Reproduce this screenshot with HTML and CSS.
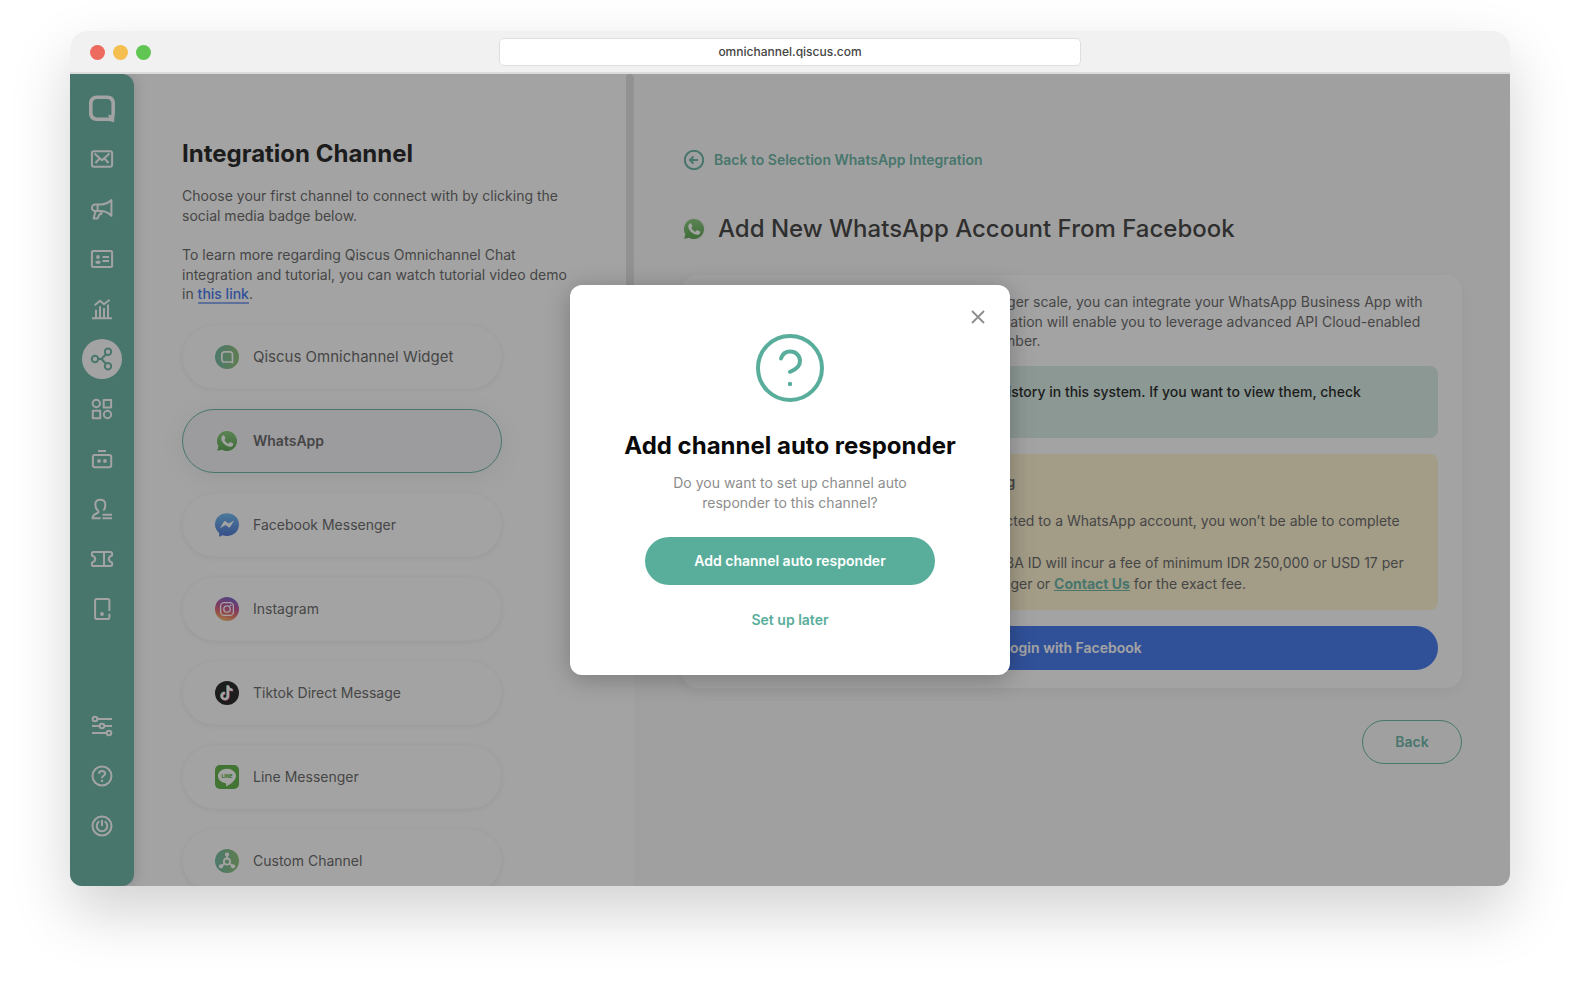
FILE: index.html
```
<!DOCTYPE html>
<html lang="en">
<head>
    <meta charset="UTF-8">
    <meta name="viewport" content="width=device-width, initial-scale=1.0">
    <title>Qiscus Omnichannel - Integration</title>
    <link rel="stylesheet" href="styles.css">
</head>
<body>
    <!-- shared icons -->
    <svg class="defs" width="0" height="0" aria-hidden="true">
        <defs>
            <linearGradient id="waGrad" x1="0" y1="0" x2="0" y2="1">
                <stop offset="0" stop-color="#7cc76e"/><stop offset="1" stop-color="#4a9c40"/>
            </linearGradient>
            <linearGradient id="qGrad" x1="0" y1="0" x2="1" y2="0">
                <stop offset="0" stop-color="#62b39d"/><stop offset="1" stop-color="#83b968"/>
            </linearGradient>
            <linearGradient id="fbGrad" x1="0" y1="0" x2="0" y2="1">
                <stop offset="0" stop-color="#5fb4f0"/><stop offset="1" stop-color="#3a66cf"/>
            </linearGradient>
            <linearGradient id="igGrad" x1="0.35" y1="1" x2="0.6" y2="0">
                <stop offset="0" stop-color="#f6b45c"/><stop offset="0.3" stop-color="#e8625a"/>
                <stop offset="0.6" stop-color="#b93c8c"/><stop offset="1" stop-color="#6a55c4"/>
            </linearGradient>
        </defs>
        <symbol id="whatsapp" viewBox="0 0 24 24">
            <path fill="#f4f4f4" d="M12 .8A11.2 11.2 0 0 0 2.3 17.600L.8 23.400l6-1.500A11.200 11.200 0 1 0 12 .8z"/>
            <path fill="url(#waGrad)" d="M12 2a10 10 0 0 0-8.600 15.100L2.300 21.800l4.800-1.100A10 10 0 1 0 12 2z"/>
            <path fill="#fff" d="M8 6.500c.5-.4 1.100-.3 1.400.3l.9 2c.2.500.1.900-.3 1.300l-.6.8c.9 1.800 2.200 3 4.100 3.900l1-1.200c.3-.4.700-.5 1.200-.3l2 1c.6.3.7.8.500 1.400-.5 1.500-2 2.200-3.400 2-4.500-.8-8.300-4.300-8.500-8.200 0-1.200.7-2.300 1.700-3z"/>
        </symbol>
    </svg>

    <div class="browser">
        <header class="browser-bar">
            <div class="dots">
                <span class="dot dot-red"></span>
                <span class="dot dot-yellow"></span>
                <span class="dot dot-green"></span>
            </div>
            <div class="address">omnichannel.qiscus.com</div>
        </header>

        <div class="app">
            <nav class="sidebar">
                <a class="logo" href="#" aria-label="Qiscus">
                    <svg width="26" height="28" viewBox="0 0 26 28"><path fill="#fff" fill-rule="evenodd" d="M8 .5h10.500c4.500 0 7.500 3 7.500 7.500V18c0 1-.2 2-.5 2.800l-.4 6.400-5-1.200H8c-4.800 0-8-3-8-7.500V8C0 3.500 3.500.5 8 .5zM8.200 4C5.500 4 3.600 5.700 3.600 8.300v9.400c0 2.900 1.900 4.700 4.600 4.700h11.900l-1-2.700 3.300.2V8.300C22.400 5.700 20.700 4 18 4z"/></svg>
                </a>
                <a class="nav-item" href="#" aria-label="Inbox">
                    <svg viewBox="0 0 24 24"><rect x="1.900" y="4.300" width="20.200" height="15.400" rx="2"/><path d="M4.500 6.500l7.500 6.700 7.500-6.700M5.500 16l4-4.500M18.500 16l-4-4.500"/></svg>
                </a>
                <a class="nav-item" href="#" aria-label="Broadcast">
                    <svg viewBox="0 0 24 24"><path d="M21.400 3c-3 3-6.500 4.400-10.700 4.400H5.200a3.300 3.300 0 0 0 0 6.600h5.500c4.200 0 7.700 1.800 10.700 4.700zM7.600 7.400V14M5.600 14l-2 7.400h4L9.800 17h1.500v-3"/></svg>
                </a>
                <a class="nav-item" href="#" aria-label="Contacts">
                    <svg viewBox="0 0 24 24"><rect x="1.900" y="3.900" width="20.200" height="16.200" rx="1.500"/><circle class="solid" cx="8" cy="10" r="1.900"/><ellipse class="solid" cx="8" cy="15.200" rx="2.700" ry="1.800"/><path d="M12.500 10H19M12.500 14H19"/></svg>
                </a>
                <a class="nav-item" href="#" aria-label="Analytics">
                    <svg viewBox="0 0 24 24"><path d="M2 21.200h20M6 20.500v-7.700M10 20.500V9.300M14 20.500V11M18 20.500V7.500M4.700 8.300L10 3.800l4 3.500 5.600-4.500"/></svg>
                </a>
                <a class="nav-item active" href="#" aria-label="Integration">
                    <svg viewBox="0 0 24 24"><circle cx="5" cy="12" r="3.200"/><circle cx="18" cy="4.800" r="3.200"/><circle cx="18" cy="19.200" r="3.200"/><path d="M8.200 12h3.300l4.400-4.700M11.500 12l4.400 4.700"/></svg>
                </a>
                <a class="nav-item" href="#" aria-label="App center">
                    <svg viewBox="0 0 24 24"><circle cx="6.300" cy="6.500" r="3.700"/><rect x="13.700" y="3" width="7.400" height="7.400"/><rect x="2.800" y="13.800" width="7.400" height="7.400"/><circle cx="17.500" cy="17.500" r="3.700"/></svg>
                </a>
                <a class="nav-item" href="#" aria-label="Bot">
                    <svg viewBox="0 0 24 24"><path d="M8 4h8"/><rect x="2.900" y="7.900" width="18.300" height="12.300" rx="2"/><circle class="solid" cx="9" cy="14" r="1.900"/><circle class="solid" cx="15" cy="14" r="1.900"/></svg>
                </a>
                <a class="nav-item" href="#" aria-label="Agents">
                    <svg viewBox="0 0 24 24"><path d="M13.300 13.500c2-1.500 2-4 2-6 0-3-2-4.700-5-4.700s-5 1.700-5 4.700c0 3 1.200 5 3 6.300v1.700c-2.300 1-5.800 2.500-5.800 5.700h8.200M12.500 17.700H22M12.500 21.200H22"/></svg>
                </a>
                <a class="nav-item" href="#" aria-label="Tickets">
                    <svg viewBox="0 0 24 24"><path d="M3.500 5h17c1 0 1.600.6 1.600 1.500v2c-2.200.7-3.300 2-3.300 3.600s1.100 2.800 3.300 3.500v2c0 .9-.6 1.500-1.600 1.500h-17c-1 0-1.600-.6-1.600-1.500v-2c2.200-.7 3.300-1.900 3.300-3.500S4.100 9.200 1.900 8.500v-2C1.900 5.600 2.500 5 3.500 5zM14 5v14"/></svg>
                </a>
                <a class="nav-item" href="#" aria-label="Devices">
                    <svg viewBox="0 0 24 24"><path d="M19.400 14V3.700c0-1.100-.7-1.800-1.800-1.800H6.900c-1.100 0-1.800.7-1.800 1.800v16.600c0 1.100.7 1.800 1.800 1.800h10.700c1.100 0 1.800-.7 1.800-1.800v-3.600"/><circle class="solid" cx="12" cy="17" r="1.900"/></svg>
                </a>
                <div class="nav-bottom">
                    <a class="nav-item" href="#" aria-label="Settings">
                        <svg viewBox="0 0 24 24"><circle cx="5" cy="5" r="2.300"/><circle cx="12" cy="12" r="2.300"/><circle cx="19" cy="19" r="2.300"/><path d="M7.500 5H22M2 12h7.500M14.500 12H22M2 19h14.500"/></svg>
                    </a>
                    <a class="nav-item" href="#" aria-label="Help">
                        <svg viewBox="0 0 24 24"><circle cx="12" cy="12" r="9.500"/><path d="M9 9.700C9 8 10.300 7 12 7s3.100 1 3.100 2.700c0 2-3.100 2.300-3.100 4.500"/><circle class="solid" cx="12" cy="16.900" r="1.200"/></svg>
                    </a>
                    <a class="nav-item" href="#" aria-label="Log out">
                        <svg viewBox="0 0 24 24"><circle cx="12" cy="12" r="9.500"/><path d="M9.300 7.400a5.300 5.300 0 1 0 5.400 0M12 6v6"/></svg>
                    </a>
                </div>
            </nav>

            <section class="channels">
                <h1>Integration Channel</h1>
                <div class="intro">
                    <p>Choose your first channel to connect with by clicking the social media badge below.</p>
                    <p>To learn more regarding Qiscus Omnichannel Chat integration and tutorial, you can watch tutorial video demo in <a href="#">this link</a>.</p>
                </div>
                <div class="channel-list">
                    <button class="channel widget">
                        <svg viewBox="0 0 24 24"><circle cx="12" cy="12" r="12" fill="url(#qGrad)"/><path fill="none" stroke="#fff" stroke-width="1.700" d="M9.500 6.800h5.300c1.700 0 2.700 1 2.700 2.700v8l-1.500-.5H9.500c-1.700 0-2.700-1-2.700-2.700V9.500c0-1.700 1-2.700 2.700-2.700z"/></svg>
                        <span>Qiscus Omnichannel Widget</span>
                    </button>
                    <button class="channel selected">
                        <svg><use href="#whatsapp"/></svg>
                        <span>WhatsApp</span>
                    </button>
                    <button class="channel">
                        <svg viewBox="0 0 24 24"><path fill="url(#fbGrad)" d="M12 .2C5.300.2 0 5 0 11.500c0 3.500 1.600 6.500 4.200 8.600v3.600l3.500-1.400c1.400.4 2.800.6 4.300.6 6.700 0 12-4.900 12-11.400S18.700.2 12 .2z"/><path fill="#fff" d="M4.800 15.200l4-6.400c.5-.8 1.300-.9 2-.4l2.600 2.100 5.800-3-3.900 6.200c-.5.8-1.300.9-2 .4l-2.700-2z"/></svg>
                        <span>Facebook Messenger</span>
                    </button>
                    <button class="channel">
                        <svg viewBox="0 0 24 24"><circle cx="12" cy="12" r="12" fill="url(#igGrad)"/><g fill="none" stroke="#fff" stroke-width="1.300"><rect x="5.600" y="5.600" width="12.800" height="12.800" rx="3.500"/><circle cx="12" cy="12" r="3.200"/></g><circle cx="15.600" cy="8.400" r=".9" fill="#fff"/></svg>
                        <span>Instagram</span>
                    </button>
                    <button class="channel">
                        <svg viewBox="0 0 24 24"><circle cx="12" cy="12" r="12" fill="#0b0b0b"/><g fill="none" stroke-width="2.300"><path stroke="#6fd8dc" d="M12.400 4.200v10.500a3.100 3.100 0 1 1-3.100-3.100M12.400 4.500c.3 2.500 1.900 3.900 4.600 4.100"/><path stroke="#e8496c" d="M13.600 5v10.500a3.100 3.100 0 1 1-3.100-3.100M13.600 5.300c.3 2.500 1.900 3.900 4.600 4.100"/><path stroke="#fff" d="M13 4.600v10.500a3.100 3.100 0 1 1-3.100-3.100M13 4.900c.3 2.500 1.900 3.900 4.600 4.100"/></g></svg>
                        <span>Tiktok Direct Message</span>
                    </button>
                    <button class="channel">
                        <svg viewBox="0 0 24 24"><rect width="24" height="24" rx="5" fill="#4fab33"/><path fill="#fff" d="M12 3.800c-5 0-9 3.300-9 7.300 0 3.600 3.200 6.600 7.500 7.200.8.200.8.500.7 1.300l-.1 1.200c0 .4.200.6.700.4 2.300-1.200 9.200-5.100 9.200-10.100 0-4-4-7.300-9-7.300z"/><text class="line-word" x="12" y="13" text-anchor="middle">LINE</text></svg>
                        <span>Line Messenger</span>
                    </button>
                    <button class="channel">
                        <svg viewBox="0 0 24 24"><circle cx="12" cy="12" r="12" fill="url(#qGrad)"/><g fill="none" stroke="#fff" stroke-width="1.800"><circle cx="12" cy="12.600" r="3.100"/><path d="M12 9.500V6M9.500 14.500L6.500 17M14.500 14.500l3 2.500"/></g><g fill="#fff"><circle cx="12" cy="5.500" r="2.100"/><circle cx="6" cy="17.300" r="2.100"/><circle cx="18" cy="17.300" r="2.100"/></g></svg>
                        <span>Custom Channel</span>
                    </button>
                </div>
            </section>

            <div class="scrollbar"></div>

            <main class="content">
                <a class="back-link" href="#">
                    <svg viewBox="0 0 20 20"><circle cx="10" cy="10" r="9.200"/><path d="M14 10H6.500M9.500 6.500L6 10l3.500 3.500"/></svg>
                    Back to Selection WhatsApp Integration
                </a>
                <h2><svg><use href="#whatsapp"/></svg>Add New WhatsApp Account From Facebook</h2>

                <div class="card">
                    <p>To take your WhatsApp Business App on a larger scale, you can integrate your WhatsApp Business App with<br>Qiscus Omnichannel Chat product. This integration will enable you to leverage advanced API Cloud-enabled<br>features with keeping your existing phone number.</p>
                    <div class="info">You will not be able to see your past chat history in this system. If you want to view them, check<br>your WhatsApp Business App.</div>
                    <div class="warning">
                        <h3>Please read these points before connecting</h3>
                        <ul>
                            <li>If your Facebook page is already connected to a WhatsApp account, you won’t be able to complete<br>the integration process.</li>
                            <li>Any changes of your number or the WABA ID will incur a fee of minimum IDR 250,000 or USD 17 per<br>adjustment. Contact your Account Manager or <a href="#">Contact Us</a> for the exact fee.</li>
                        </ul>
                    </div>
                    <button class="fb-button">Login with Facebook</button>
                </div>
                <button class="back-button">Back</button>
            </main>

            <div class="overlay">
                <div class="modal" role="dialog" aria-labelledby="modalTitle">
                    <button class="close" aria-label="Close">
                        <svg viewBox="0 0 14 14"><path d="M1 1l12 12M13 1L1 13"/></svg>
                    </button>
                    <svg class="question" viewBox="0 0 68 68"><circle cx="34" cy="34" r="32"/><path d="M25 24.500c1.200-4 4.500-7 9.200-7 5.600 0 9.800 4 9.800 9.500 0 6-4.500 8.800-10 10.800"/><circle class="point" cx="34" cy="50" r="2.200"/></svg>
                    <h2 id="modalTitle">Add channel auto responder</h2>
                    <p>Do you want to set up channel auto responder to this channel?</p>
                    <button class="primary">Add channel auto responder</button>
                    <button class="later">Set up later</button>
                </div>
            </div>
        </div>
    </div>
</body>
</html>
```
FILE: styles.css
```
* {
    box-sizing: border-box;
}

body {
    font-family: Inter, "Liberation Sans", sans-serif;
    font-size: 14px;
    line-height: 1.4;
    color: #565656;
    margin: 0;
    padding: 31px 70px 109px;
    height: 100vh;
    background: #fff;
}

h1, h2, h3, p, ul {
    margin: 0;
}

button {
    font: inherit;
    cursor: pointer;
}

.defs {
    position: absolute;
}

/* browser window */
.browser {
    display: flex;
    flex-direction: column;
    height: 100%;
    border-radius: 18px 18px 12px 12px;
    overflow: hidden;
    box-shadow: 0 26px 60px rgba(0, 0, 0, 0.18);
}

.browser-bar {
    display: grid;
    grid-template-columns: 1fr 582px 1fr;
    align-items: center;
    height: 43px;
    flex-shrink: 0;
    padding: 1px 20px 0;
    background: #f1f1f1;
    border-bottom: 2px solid #dcdcdc;
}

.dots {
    display: flex;
    gap: 8px;
}

.dot {
    width: 15px;
    height: 15px;
    border-radius: 50%;
}

.dot-red { background: #ed6a5e; }
.dot-yellow { background: #f5bf4f; }
.dot-green { background: #61c554; }

.address {
    height: 28px;
    line-height: 26px;
    text-align: center;
    font-size: 12px;
    font-weight: 500;
    color: #444;
    background: #fff;
    border: 1px solid #dedede;
    border-radius: 5px;
}

.app {
    position: relative;
    display: flex;
    flex: 1;
    min-height: 0;
    overflow: hidden;
    background: #fff;
}

/* sidebar */
.sidebar {
    display: flex;
    flex-direction: column;
    align-items: center;
    gap: 10px;
    width: 64px;
    flex-shrink: 0;
    padding: 15px 0 40px;
    background: #59ae9b;
    border-radius: 0 12px 12px 0;
    box-shadow: 2px 0 12px rgba(0, 0, 0, 0.15);
}

.logo {
    display: flex;
    align-items: center;
    height: 40px;
}

.nav-item {
    display: flex;
    align-items: center;
    justify-content: center;
    width: 40px;
    height: 40px;
    border-radius: 50%;
    color: #fff;
}

.nav-item svg {
    width: 24px;
    height: 24px;
    fill: none;
    stroke: currentColor;
    stroke-width: 2;
    stroke-linejoin: round;
}

.nav-item .solid {
    fill: currentColor;
    stroke: none;
}

.nav-item.active {
    background: #fff;
    color: #59ae9b;
}

.nav-bottom {
    display: flex;
    flex-direction: column;
    gap: 10px;
    margin-top: auto;
}

/* channel list */
.channels {
    width: 492px;
    flex-shrink: 0;
    padding: 64px 48px 0;
}

.channels h1 {
    font-size: 24px;
    line-height: 32px;
    font-weight: 700;
    color: #0a0a0a;
}

.intro {
    max-width: 388px;
    margin: 16px 0 21px;
}

.intro p + p {
    margin-top: 20px;
}

.intro a {
    font-weight: 500;
    color: #2f69ec;
    text-decoration: none;
    border-bottom: 2px solid #7fa2f0;
}

.channel-list {
    display: flex;
    flex-direction: column;
    gap: 20px;
}

.channel {
    display: flex;
    align-items: center;
    gap: 14px;
    width: 320px;
    height: 64px;
    flex-shrink: 0;
    padding: 0 32px;
    color: #565656;
    background: #fff;
    border: 1px solid #fbfbfb;
    border-radius: 32px;
    box-shadow: 0 1px 5px rgba(0, 0, 0, 0.08);
}

.channel svg {
    width: 24px;
    height: 24px;
}

.channel.widget {
    font-size: 15px;
}

.channel.selected {
    font-weight: 600;
    background: #f2f2f7;
    border-color: #59ae9b;
    box-shadow: 0 4px 24px rgba(0, 0, 0, 0.08);
}

.line-word {
    font-size: 5px;
    font-weight: 800;
    fill: #4fab33;
}

.scrollbar {
    width: 8px;
    flex-shrink: 0;
    height: 540px;
    background: #e0e0e0;
    border-radius: 4px;
}

/* right side */
.content {
    flex: 1;
    min-width: 0;
    display: flex;
    flex-direction: column;
    align-items: flex-start;
    padding: 76px 48px 0;
    background: #fafafa;
}

.back-link {
    display: flex;
    align-items: center;
    gap: 10px;
    height: 20px;
    padding-left: 2px;
    font-weight: 600;
    color: #59ae9b;
    text-decoration: none;
}

.back-link svg {
    width: 20px;
    height: 20px;
    fill: none;
    stroke: currentColor;
    stroke-width: 2;
}

.content h2 {
    display: flex;
    align-items: center;
    gap: 12px;
    margin: 43px 0 30px;
    font-size: 24px;
    line-height: 32px;
    font-weight: 500;
    color: #2c2c2c;
}

.content h2 svg {
    width: 24px;
    height: 24px;
}

.card {
    width: 100%;
    display: flex;
    flex-direction: column;
    padding: 17px 24px 18px;
    background: #fff;
    border-radius: 16px;
    box-shadow: 0 4px 16px rgba(0, 0, 0, 0.06);
    white-space: nowrap;
}

.info {
    margin-top: 15px;
    padding: 16px;
    line-height: 20px;
    font-weight: 500;
    color: #0a0a0a;
    background: #d5ebe3;
    border-radius: 8px;
}

.warning {
    margin: 16px 0;
    padding: 16px;
    background: #fff2cc;
    border-radius: 8px;
}

.warning h3 {
    margin-bottom: 16px;
    font-size: 14px;
    line-height: 24px;
    font-weight: 600;
}

.warning ul {
    padding-left: 22px;
    line-height: 21px;
}

.warning a {
    font-weight: 700;
    color: #59ae9b;
}

.fb-button {
    height: 44px;
    font-weight: 600;
    color: #fff;
    background: #2f69ec;
    border: none;
    border-radius: 22px;
}

.back-button {
    align-self: flex-end;
    width: 100px;
    height: 44px;
    margin-top: 32px;
    font-weight: 600;
    color: #59ae9b;
    background: transparent;
    border: 1px solid #59ae9b;
    border-radius: 22px;
}

/* modal */
.overlay {
    position: absolute;
    inset: 0;
    display: flex;
    align-items: center;
    justify-content: center;
    background: rgba(51, 51, 51, 0.45);
}

.modal {
    position: relative;
    display: flex;
    flex-direction: column;
    align-items: center;
    width: 440px;
    padding: 49px 48px 40px;
    text-align: center;
    background: #fff;
    border-radius: 12px;
    box-shadow: 0 4px 24px rgba(0, 0, 0, 0.25);
}

.close {
    position: absolute;
    top: 20px;
    right: 20px;
    display: flex;
    padding: 5px;
    background: none;
    border: none;
}

.close svg {
    width: 14px;
    height: 14px;
    fill: none;
    stroke: #8d8d8d;
    stroke-width: 1.8;
}

.question {
    width: 68px;
    height: 68px;
    fill: none;
    stroke: #59ae9b;
    stroke-width: 4;
    stroke-linecap: round;
}

.question .point {
    fill: #59ae9b;
    stroke: none;
}

.modal h2 {
    margin: 28px 0 11px;
    font-size: 24px;
    line-height: 32px;
    font-weight: 700;
    color: #0a0a0a;
    white-space: nowrap;
}

.modal p {
    max-width: 260px;
    color: #8d8d8d;
}

.primary {
    width: 290px;
    height: 48px;
    margin-top: 24px;
    font-weight: 600;
    color: #fff;
    background: #59ae9b;
    border: none;
    border-radius: 24px;
}

.later {
    height: 30px;
    margin-top: 20px;
    font-weight: 600;
    color: #59ae9b;
    background: none;
    border: none;
}
```
